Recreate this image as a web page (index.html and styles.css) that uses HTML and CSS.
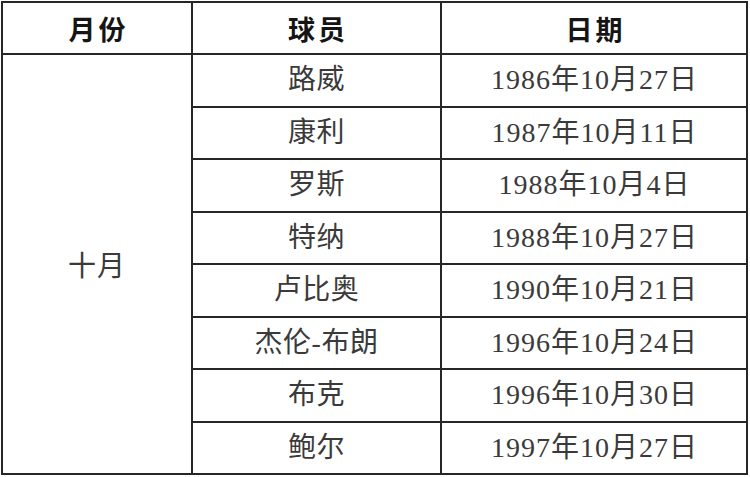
FILE: index.html
```html
<!DOCTYPE html>
<html lang="zh">
<head>
<meta charset="utf-8">
<link rel="stylesheet" href="styles.css">
</head>
<body>
<table class="tbl">
  <colgroup>
    <col class="c1"><col class="c2"><col class="c3">
  </colgroup>
  <thead>
    <tr class="head"><th>月份</th><th>球员</th><th>日期</th></tr>
  </thead>
  <tbody>
    <tr><td class="month" rowspan="8">十月</td><td>路威</td><td class="date">1986年10月27日</td></tr>
    <tr><td>康利</td><td class="date">1987年10月11日</td></tr>
    <tr><td>罗斯</td><td class="date">1988年10月4日</td></tr>
    <tr><td>特纳</td><td class="date">1988年10月27日</td></tr>
    <tr><td>卢比奥</td><td class="date">1990年10月21日</td></tr>
    <tr><td>杰伦-布朗</td><td class="date">1996年10月24日</td></tr>
    <tr><td>布克</td><td class="date">1996年10月30日</td></tr>
    <tr><td>鲍尔</td><td class="date">1997年10月27日</td></tr>
  </tbody>
</table>
</body>
</html>
```

FILE: styles.css
```css
html, body {
  margin: 0;
  padding: 0;
  background: #ffffff;
}
body {
  padding: 1px;
}
.tbl {
  border-collapse: collapse;
  width: 747px;
  table-layout: fixed;
  font-family: "Liberation Serif", "Noto Sans CJK SC", serif;
  font-size: 28px;
  color: #3a3a3a;
}
.c1 { width: 190px; }
.c2 { width: 249px; }
.c3 { width: 306px; }
.tbl th, .tbl td {
  border: 2px solid #262626;
  text-align: center;
  vertical-align: middle;
  padding: 0;
  line-height: 1;
}
.tbl th {
  font-family: "Noto Sans CJK SC", sans-serif;
  font-weight: 700;
  color: #151515;
  font-size: 27px;
  letter-spacing: 3px;
  text-indent: 3px;
}
.head { height: 52px; }
.tbl tbody tr { height: 52.5px; }
.tbl td {
  font-weight: 400;
  letter-spacing: 0.5px;
}
.tbl td.date {
  letter-spacing: 1px;
  text-indent: 1px;
}
.tbl td.month {
  font-family: "Noto Sans CJK SC", sans-serif;
  letter-spacing: 1px;
}
```
